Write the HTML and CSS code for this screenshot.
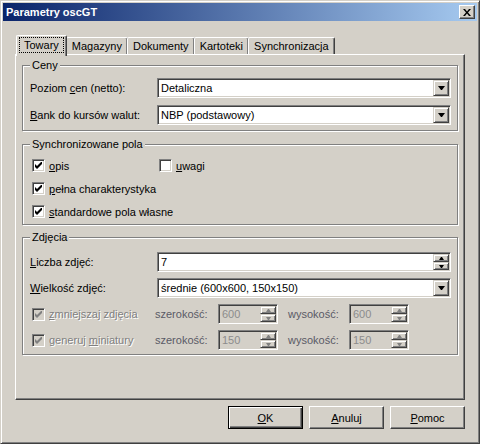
FILE: index.html
```html
<!DOCTYPE html>
<html lang="pl">

<head>
    <meta charset="UTF-8" />
    <title>Parametry oscGT</title>
    <link rel="stylesheet" href="styles.css">
</head>

<body>
    <div class="window">
        <!-- Title bar -->
        <div class="titlebar">
            <span class="title">Parametry oscGT</span>
            <span class="caption-btn">
                <svg width="8" height="7" viewBox="0 0 8 7"><path d="M0 0h2l2 2.4 2-2.4h2l-3 3.5 3 3.5h-2l-2-2.4-2 2.4h-2l3-3.5z" /></svg>
            </span>
        </div>

        <!-- Tabs -->
        <div class="tabs">
            <div class="tab active"><span class="focus">Towary</span></div>
            <div class="tab">Magazyny</div>
            <div class="tab">Dokumenty</div>
            <div class="tab">Kartoteki</div>
            <div class="tab">Synchronizacja</div>
        </div>

        <div class="panel">
            <!-- Ceny -->
            <div class="group">
                <div class="group-title">Ceny</div>
                <div class="field">
                    <span class="label">Poziom <u>c</u>en (netto):</span>
                    <div class="combo">
                        <span class="value">Detaliczna</span>
                        <span class="drop"><svg width="7" height="4" viewBox="0 0 7 4"><polygon points="0,0 7,0 4,4 3,4" /></svg></span>
                    </div>
                </div>
                <div class="field">
                    <span class="label"><u>B</u>ank do kursów walut:</span>
                    <div class="combo">
                        <span class="value">NBP (podstawowy)</span>
                        <span class="drop"><svg width="7" height="4" viewBox="0 0 7 4"><polygon points="0,0 7,0 4,4 3,4" /></svg></span>
                    </div>
                </div>
            </div>

            <!-- Synchronizowane pola -->
            <div class="group sync">
                <div class="group-title">Synchronizowane pola</div>
                <div class="check-row">
                    <label class="check first">
                        <span class="box"><svg width="7" height="7" viewBox="0 0 7 7"><polygon points="0,2 2,4 6,0 7,0 7,2 2,7 0,5" /></svg></span>
                        <span><u>o</u>pis</span>
                    </label>
                    <label class="check">
                        <span class="box"></span>
                        <span><u>u</u>wagi</span>
                    </label>
                </div>
                <div class="check-row">
                    <label class="check">
                        <span class="box"><svg width="7" height="7" viewBox="0 0 7 7"><polygon points="0,2 2,4 6,0 7,0 7,2 2,7 0,5" /></svg></span>
                        <span><u>p</u>ełna charakterystyka</span>
                    </label>
                </div>
                <div class="check-row">
                    <label class="check">
                        <span class="box"><svg width="7" height="7" viewBox="0 0 7 7"><polygon points="0,2 2,4 6,0 7,0 7,2 2,7 0,5" /></svg></span>
                        <span><u>s</u>tandardowe pola własne</span>
                    </label>
                </div>
            </div>

            <!-- Zdjecia -->
            <div class="group photos">
                <div class="group-title">Zdjęcia</div>
                <div class="field">
                    <span class="label"><u>L</u>iczba zdjęć:</span>
                    <div class="spin">
                        <span class="value">7</span>
                        <span class="arrows">
                            <span class="step"><svg width="5" height="3" viewBox="0 0 5 3"><polygon points="0,3 5,3 3,0 2,0" /></svg></span>
                            <span class="step"><svg width="5" height="3" viewBox="0 0 5 3"><polygon points="0,0 5,0 3,3 2,3" /></svg></span>
                        </span>
                    </div>
                </div>
                <div class="field">
                    <span class="label"><u>W</u>ielkość zdjęć:</span>
                    <div class="combo">
                        <span class="value">średnie (600x600, 150x150)</span>
                        <span class="drop"><svg width="7" height="4" viewBox="0 0 7 4"><polygon points="0,0 7,0 4,4 3,4" /></svg></span>
                    </div>
                </div>
                <div class="field size-row">
                    <label class="check disabled">
                        <span class="box"><svg width="7" height="7" viewBox="0 0 7 7"><polygon points="0,2 2,4 6,0 7,0 7,2 2,7 0,5" /></svg></span>
                        <span><u>z</u>mniejszaj zdjęcia</span>
                    </label>
                    <span class="dim-label">szerokość:</span>
                    <div class="spin small disabled">
                        <span class="value">600</span>
                        <span class="arrows">
                            <span class="step"><svg width="5" height="3" viewBox="0 0 5 3"><polygon points="0,3 5,3 3,0 2,0" /></svg></span>
                            <span class="step"><svg width="5" height="3" viewBox="0 0 5 3"><polygon points="0,0 5,0 3,3 2,3" /></svg></span>
                        </span>
                    </div>
                    <span class="dim-label second">wysokość:</span>
                    <div class="spin small disabled">
                        <span class="value">600</span>
                        <span class="arrows">
                            <span class="step"><svg width="5" height="3" viewBox="0 0 5 3"><polygon points="0,3 5,3 3,0 2,0" /></svg></span>
                            <span class="step"><svg width="5" height="3" viewBox="0 0 5 3"><polygon points="0,0 5,0 3,3 2,3" /></svg></span>
                        </span>
                    </div>
                </div>
                <div class="field size-row">
                    <label class="check disabled">
                        <span class="box"><svg width="7" height="7" viewBox="0 0 7 7"><polygon points="0,2 2,4 6,0 7,0 7,2 2,7 0,5" /></svg></span>
                        <span>generuj <u>m</u>iniatury</span>
                    </label>
                    <span class="dim-label">szerokość:</span>
                    <div class="spin small disabled">
                        <span class="value">150</span>
                        <span class="arrows">
                            <span class="step"><svg width="5" height="3" viewBox="0 0 5 3"><polygon points="0,3 5,3 3,0 2,0" /></svg></span>
                            <span class="step"><svg width="5" height="3" viewBox="0 0 5 3"><polygon points="0,0 5,0 3,3 2,3" /></svg></span>
                        </span>
                    </div>
                    <span class="dim-label second">wysokość:</span>
                    <div class="spin small disabled">
                        <span class="value">150</span>
                        <span class="arrows">
                            <span class="step"><svg width="5" height="3" viewBox="0 0 5 3"><polygon points="0,3 5,3 3,0 2,0" /></svg></span>
                            <span class="step"><svg width="5" height="3" viewBox="0 0 5 3"><polygon points="0,0 5,0 3,3 2,3" /></svg></span>
                        </span>
                    </div>
                </div>
            </div>
        </div>

        <!-- Dialog buttons -->
        <div class="buttons">
            <button class="btn default"><u>O</u>K</button>
            <button class="btn"><u>A</u>nuluj</button>
            <button class="btn"><u>P</u>omoc</button>
        </div>
    </div>
</body>

</html>
```

FILE: styles.css
```css
body {
    margin: 0;
    font-family: "Liberation Sans", Arial, sans-serif;
    font-size: 11px;
    color: #000;
    background: #d4d0c8;
}

u {
    text-decoration-thickness: 1px;
    text-underline-offset: 1px;
}

.window {
    width: 480px;
    height: 444px;
    box-sizing: border-box;
    padding: 2px;
    background: #d4d0c8;
    border: 1px solid;
    border-color: #d4d0c8 #404040 #404040 #d4d0c8;
    box-shadow: inset 1px 1px #fff, inset -1px -1px #808080;
    display: flex;
    flex-direction: column;
}

/* title bar */
.titlebar {
    height: 18px;
    display: flex;
    align-items: center;
    padding: 0 2px 0 3px;
    background: linear-gradient(to right, #0a246a, #a6caf0);
}

.title {
    flex: 1;
    color: #fff;
    font-weight: bold;
    font-size: 11px;
}

.caption-btn {
    width: 16px;
    height: 14px;
    box-sizing: border-box;
    display: flex;
    align-items: center;
    justify-content: center;
    background: #d4d0c8;
    border: 1px solid;
    border-color: #fff #404040 #404040 #fff;
    box-shadow: inset -1px -1px #808080;
}

/* tabs */
.tabs {
    display: flex;
    align-items: flex-end;
    margin: 14px 0 0 13px;
}

.tab {
    height: 17px;
    box-sizing: border-box;
    padding: 0 5px;
    display: flex;
    align-items: center;
    border-left: 1px solid #fff;
    border-top: 1px solid #fff;
    border-right: 1px solid #404040;
    border-radius: 2px 2px 0 0;
    box-shadow: inset -1px 0 #808080;
    margin-left: -1px;
}

.tab.active {
    position: relative;
    z-index: 1;
    height: 21px;
    margin-bottom: -2px;
    margin-left: 0;
    padding: 0 3px 3px 3px;
    background: #d4d0c8;
}

.focus {
    padding: 1px 4px;
    outline: 1px dotted #000;
}

/* tab page */
.panel {
    width: 450px;
    height: 346px;
    box-sizing: border-box;
    margin-left: 12px;
    border: 1px solid;
    border-color: #fff #404040 #404040 #fff;
    box-shadow: inset -1px -1px #808080;
    display: flex;
    flex-direction: column;
}

.group {
    margin: 10px 6px 0 6px;
    padding: 0 6px 5px 7px;
    border: 1px solid #808080;
    box-shadow: inset 1px 1px #fff, 1px 1px #fff;
    display: flex;
    flex-direction: column;
}

.group.sync {
    margin-top: 13px;
    padding-bottom: 4px;
}

.group.photos {
    margin-top: 12px;
    padding-bottom: 4px;
}

.group-title {
    align-self: flex-start;
    margin-top: -7px;
    padding: 0 2px;
    line-height: 13px;
    background: #d4d0c8;
}

.field {
    display: flex;
    align-items: center;
    height: 20px;
    margin-top: 7px;
}

.group-title + .field {
    margin-top: 6px;
}

.photos .field {
    margin-top: 6px;
}

.photos .group-title + .field {
    margin-top: 8px;
}

.label {
    width: 127px;
    flex: none;
}

/* combo box and edit with spinner */
.combo,
.spin {
    flex: 1;
    height: 20px;
    box-sizing: border-box;
    padding: 1px;
    display: flex;
    background: #fff;
    border: 1px solid;
    border-color: #808080 #fff #fff #808080;
    box-shadow: inset 1px 1px #404040, inset -1px -1px #d4d0c8;
}

.value {
    flex: 1;
    padding-left: 2px;
    line-height: 16px;
    white-space: nowrap;
    overflow: hidden;
}

.drop,
.step {
    width: 16px;
    box-sizing: border-box;
    display: flex;
    align-items: center;
    justify-content: center;
    background: #d4d0c8;
    border: 1px solid;
    border-color: #d4d0c8 #404040 #404040 #d4d0c8;
    box-shadow: inset 1px 1px #fff, inset -1px -1px #808080;
}

.drop {
    height: 16px;
}

.arrows {
    display: flex;
    flex-direction: column;
}

.step {
    height: 8px;
}

.spin.small {
    flex: none;
    width: 60px;
}

.spin.disabled {
    background: #d4d0c8;
    color: #8c8c8c;
}

.spin.disabled svg {
    fill: #808080;
}

/* checkboxes */
.check-row {
    display: flex;
    align-items: center;
    height: 17px;
    margin-top: 6px;
}

.check {
    display: flex;
    align-items: center;
    margin-left: 2px;
}

.check.first {
    width: 125px;
}

.box {
    width: 13px;
    height: 13px;
    box-sizing: border-box;
    margin-right: 4px;
    display: flex;
    align-items: center;
    justify-content: center;
    background: #fff;
    border: 1px solid;
    border-color: #808080 #fff #fff #808080;
    box-shadow: inset 1px 1px #404040, inset -1px -1px #d4d0c8;
}

.size-row .check {
    width: 123px;
}

.check.disabled {
    color: #808080;
    text-shadow: 1px 1px #fff;
}

.check.disabled .box {
    background: #d4d0c8;
}

.check.disabled svg {
    fill: #808080;
}

.dim-label {
    width: 63px;
    color: #5a5a66;
}

.dim-label.second {
    width: 61px;
    margin-left: 10px;
}

/* buttons */
.buttons {
    display: flex;
    justify-content: flex-end;
    gap: 6px;
    margin-top: 6px;
    padding-right: 12px;
}

.btn {
    width: 75px;
    height: 23px;
    box-sizing: border-box;
    padding: 0;
    font: inherit;
    color: #000;
    background: #d4d0c8;
    border: 1px solid;
    border-color: #fff #404040 #404040 #fff;
    box-shadow: inset -1px -1px #808080;
}

.btn.default {
    border-color: #000;
    box-shadow: inset 1px 1px #fff, inset -1px -1px #404040, inset -2px -2px #808080;
}
```
